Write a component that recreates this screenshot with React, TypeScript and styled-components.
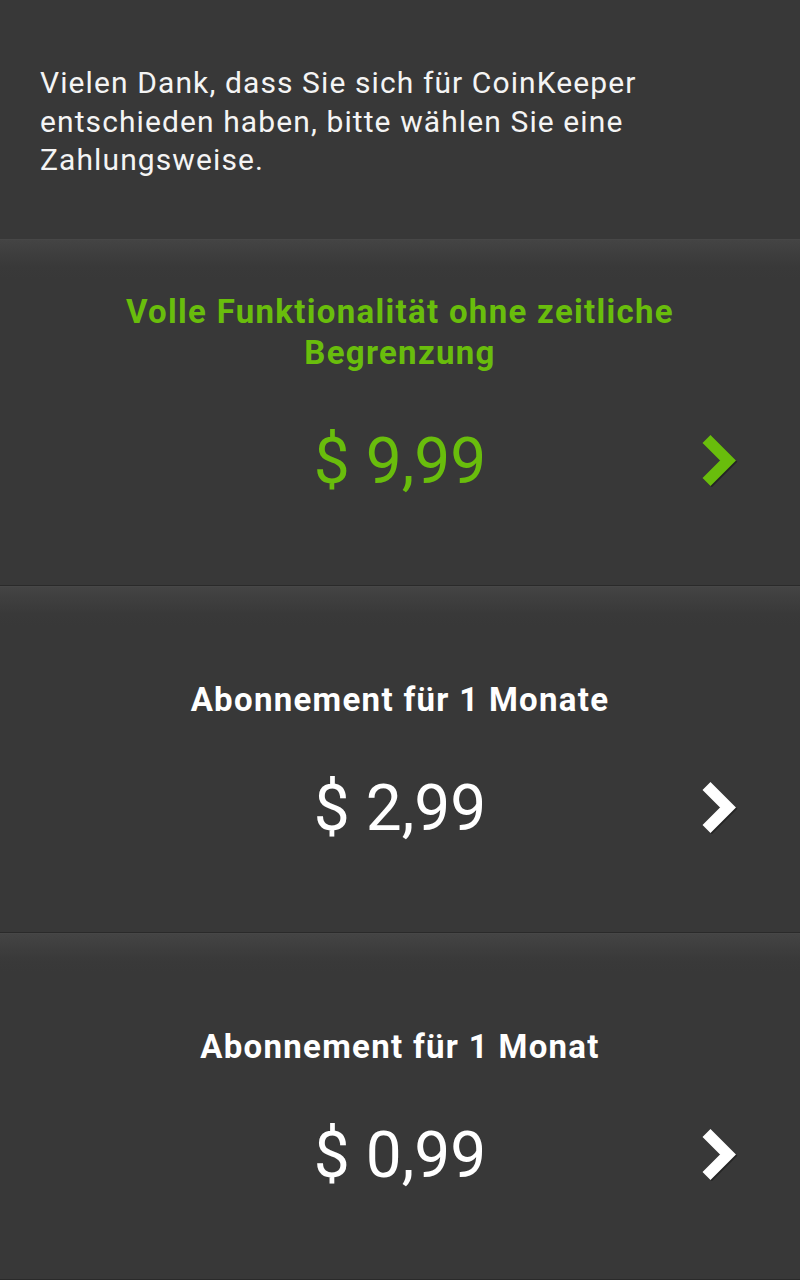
import React from "react";
import styled, { createGlobalStyle } from "styled-components";

const GlobalStyle = createGlobalStyle`
  html, body {
    margin: 0;
    padding: 0;
    background: #383838;
  }
  body {
    font-family: Roboto, "Noto Sans", "Liberation Sans", sans-serif;
    -webkit-font-smoothing: antialiased;
  }
`;

const Screen = styled.div`
  width: 800px;
  height: 1280px;
  background: #383838;
  display: flex;
  flex-direction: column;
  overflow: hidden;
`;

const Header = styled.div`
  height: 239px;
  box-sizing: border-box;
  padding: 64px 40px 0 40px;
  color: #f4f4f4;
  font-size: 30px;
  line-height: 38.5px;
  letter-spacing: 1.1px;
  font-weight: 400;
`;

const Card = styled.div`
  height: 347px;
  box-sizing: border-box;
  border-bottom: 1px solid #2a2a2a;
  background: linear-gradient(
    to bottom,
    #4a4a4a 0px,
    #444444 1px,
    #3f3f3f 12px,
    #393939 28px,
    #383838 40px
  );
  display: flex;
  flex-direction: column;
`;

const TitleArea = styled.div`
  height: 134px;
  display: flex;
  flex-direction: column;
  justify-content: flex-end;
  align-items: center;
  padding: 0 60px;
`;

const Title = styled.div<{ $accent: boolean }>`
  color: ${(p) => (p.$accent ? "#69bd0c" : "#ffffff")};
  font-size: 33px;
  line-height: 41px;
  letter-spacing: 1.3px;
  font-weight: 700;
  text-align: center;
`;

const PriceRow = styled.div`
  margin-top: 51px;
  display: grid;
  grid-template-columns: 1fr auto 1fr;
  align-items: center;
`;

const Price = styled.div<{ $accent: boolean }>`
  grid-column: 2;
  color: ${(p) => (p.$accent ? "#69bd0c" : "#ffffff")};
  font-size: 64px;
  line-height: 75px;
  font-weight: 400;
  white-space: nowrap;
`;

const ChevronBox = styled.div`
  grid-column: 3;
  justify-self: end;
  margin-right: 62px;
  margin-top: -4px;
  width: 40px;
  height: 54px;
  display: flex;
`;

const Chevron: React.FC<{ color: string }> = ({ color }) => (
  <svg width="40" height="54" viewBox="0 0 40 54">
    <polyline
      points="8.5,6 30,27.5 8.5,49"
      fill="none"
      stroke="#1e1e1e"
      strokeOpacity="0.75"
      strokeWidth="11.3"
      strokeLinejoin="miter"
      strokeLinecap="butt"
      transform="translate(1.3,1.3)"
    />
    <polyline
      points="8.5,6 30,27.5 8.5,49"
      fill="none"
      stroke={color}
      strokeWidth="11.3"
      strokeLinejoin="miter"
      strokeLinecap="butt"
    />
  </svg>
);

const plans = [
  { title: "Volle Funktionalität ohne zeitliche Begrenzung", price: "$ 9,99", accent: true },
  { title: "Abonnement für 1 Monate", price: "$ 2,99", accent: false },
  { title: "Abonnement für 1 Monat", price: "$ 0,99", accent: false },
];

export default function App() {
  return (
    <>
      <GlobalStyle />
      <Screen>
        <Header>
          Vielen Dank, dass Sie sich für CoinKeeper entschieden haben, bitte wählen Sie eine
          Zahlungsweise.
        </Header>
        {plans.map((p) => (
          <Card key={p.price}>
            <TitleArea>
              <Title $accent={p.accent}>{p.title}</Title>
            </TitleArea>
            <PriceRow>
              <Price $accent={p.accent}>{p.price}</Price>
              <ChevronBox>
                <Chevron color={p.accent ? "#69bd0c" : "#ffffff"} />
              </ChevronBox>
            </PriceRow>
          </Card>
        ))}
      </Screen>
    </>
  );
}
